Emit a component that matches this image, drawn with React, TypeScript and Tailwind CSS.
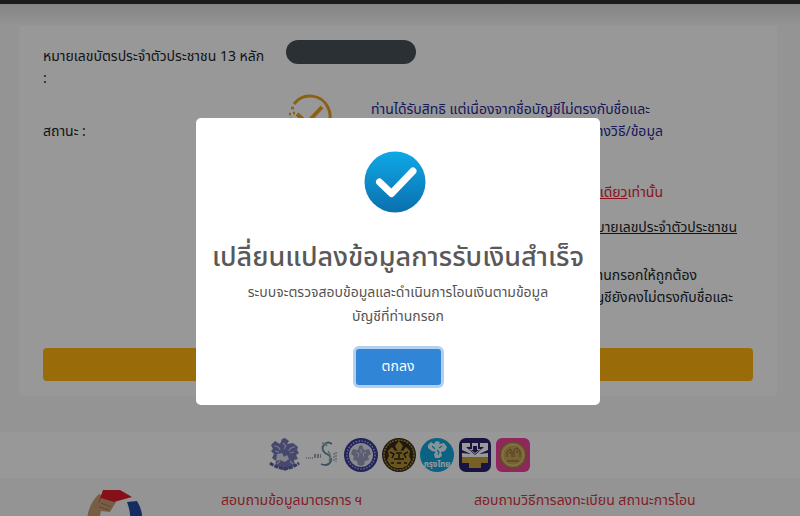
import type { ReactNode } from "react";

const SuccessIcon = () => (
  <svg viewBox="0 0 62 62" className="size-[62px]" aria-hidden="true">
    <defs>
      <linearGradient id="success" x1="0" y1="0" x2="0" y2="1">
        <stop offset="0" stopColor="#0fa8e6" />
        <stop offset="1" stopColor="#0b6fae" />
      </linearGradient>
    </defs>
    <circle cx="31" cy="31" r="30.5" fill="url(#success)" />
    <path
      d="M15.5 31 L27.5 42.5 L49 20"
      fill="none"
      stroke="#fff"
      strokeWidth="7"
      strokeLinecap="round"
      strokeLinejoin="round"
    />
  </svg>
);

const StatusIcon = () => (
  <svg
    viewBox="0 0 46 46"
    className="size-[46px]"
    fill="none"
    stroke="#e8a020"
    strokeWidth="3"
    aria-hidden="true"
  >
    <path d="M8 11 A20 20 0 1 1 23 43" />
    <path d="M5 15h3M3 21h2M7 20h2M4 26h3" strokeWidth="2.5" />
    <path d="M11 21 L21 30 L36 14" strokeWidth="4" />
  </svg>
);

const PartnerLogos = () => (
  <div className="flex justify-center gap-1 pr-0.5">
    <svg viewBox="0 0 34 34" className="size-[34px]" aria-hidden="true">
      <path
        d="M3 7l4-4 5 3 2-5 3-1 4 3-2 3 6-1 5 4-1 3 2 3-3 2 2 4-4 1 1 5-5 3-5 3-5-3-5-2 1-5-4-3 2-4-3-3 2-2z"
        fill="#7779b8"
      />
      <path
        d="M6 8q5 0 6 4M27 9q-5 0-6 4M7 13l4 1M26 14l-4 1M9 26l3-3M25 26l-3-3M15 5l3 3-2 3"
        fill="none"
        stroke="#c8c8e0"
        strokeWidth="1.2"
      />
      <path d="M9 16l5-1 2 4 3-2 2 4-4 3-5-2-4 1z" fill="#dcdcec" />
      <path d="M2 25q15 11 29 0" fill="none" stroke="#5b5ea8" strokeWidth="3" strokeDasharray="4 1" />
    </svg>
    <svg viewBox="0 0 34 34" className="size-[34px]" fill="none" aria-hidden="true">
      <path d="M0 20h7" stroke="#8c95a8" strokeWidth="1.5" strokeDasharray="1 1" />
      <path d="M8 19h7M8 17h7" stroke="#7c87a0" strokeWidth="1.5" strokeDasharray="2 1" />
      <path
        d="M26 6 Q22 3 19 6 Q14 10 19 15 Q26 18 25 23 Q22 29 15 26"
        stroke="#6389aa"
        strokeWidth="1.8"
      />
      <path d="M16 5q3 0 5 3M22 13q4 5 1 10" stroke="#8db5b9" strokeWidth="1.5" />
      <path d="M28 15v9M30 14v10" stroke="#7c87a0" strokeWidth="1" strokeDasharray="2 1" />
    </svg>
    <svg viewBox="0 0 34 34" className="size-[34px]" aria-hidden="true">
      <circle cx="17" cy="17" r="17" fill="#3b3b98" />
      <circle cx="17" cy="17" r="14" fill="none" stroke="#b5b5dd" strokeWidth="1.5" strokeDasharray="1.5 1.5" />
      <circle cx="17" cy="17" r="12" fill="#e4e4ee" />
      <path
        d="M9 11l5 1 1-4 3-1 2 5 5-1 2 5-3 2 1 4-4 1-1 4-3 1-3-1-1-4-4-1 1-4-3-2z"
        fill="#9a9cbc"
      />
      <path d="M12 14l3 2-1 3M22 14l-3 2 1 3M17 11v4" fill="none" stroke="#d9d9e5" />
    </svg>
    <svg viewBox="0 0 34 34" className="size-[34px]" aria-hidden="true">
      <circle cx="17" cy="17" r="17" fill="#332a1d" />
      <circle cx="17" cy="17" r="15" fill="none" stroke="#ac8c32" strokeWidth="1.5" strokeDasharray="2 1" />
      <path d="M17 3l4 5-2 4h-4l-2-4z" fill="#b18f31" />
      <path d="M6 13l4-4 3 4 4-1 4 1 3-4 4 4-1 5 2 4-4 6-5 2h-6l-5-2-4-6 2-4z" fill="#b18f31" />
      <path
        d="M8 14l4 2-2 4M26 14l-4 2 2 4M14 15h6M12 21h10M17 16v4M9 25h3M15 25h4M22 25h3"
        fill="none"
        stroke="#2a2118"
        strokeWidth="1.5"
      />
    </svg>
    <svg viewBox="0 0 34 34" className="size-[34px]" aria-hidden="true">
      <circle cx="17" cy="17" r="17" fill="#13a5dc" />
      <path
        d="M8 7l3-3 3 2 2-3 4 1-1 2 5-1 3 4-2 4-4 1 1 4-3 2h-4l-1-4 2-2-4-1-4-3z"
        fill="#e5f6fb"
      />
      <path d="M12 8l3 3M22 8l-3 2M17 12l2 2-1 3" fill="none" stroke="#13a5dc" strokeWidth="1.2" />
      <text x="17" y="29" textAnchor="middle" fill="#fff" fontSize="8" fontWeight="700">
        กรุงไทย
      </text>
    </svg>
    <svg viewBox="0 0 34 34" className="size-[34px]" aria-hidden="true">
      <rect x="1" y="0" width="32" height="34" rx="7" fill="#28206d" />
      <rect x="4" y="5" width="26" height="14" fill="#fff" />
      <path d="M12 3h10v6h4l-9 8-9-8h4z" fill="#28206d" />
      <path d="M14 5h6v6h3l-6 5-6-5h3z" fill="#fff" />
      <path d="M15 8h4v4h2l-4 3-4-3h2z" fill="#28206d" />
      <path d="M4 12l9 4-9-1zM30 12l-9 4 9-1z" fill="#28206d" />
      <path d="M4 19h26v6h-7v5h-12v-5h-7z" fill="#c6a13b" />
    </svg>
    <svg viewBox="0 0 34 34" className="size-[34px]" aria-hidden="true">
      <rect width="34" height="34" rx="6" fill="#ee429d" />
      <circle cx="17" cy="17" r="13" fill="#c6a45b" stroke="#a57a3d" strokeWidth="1.5" />
      <circle cx="17" cy="17" r="10.5" fill="none" stroke="#e6cf8d" />
      <path
        d="M11 19v-5l3-3 2 3v5M18 19v-7l3-2 3 4v5M11 23h12M13 15h2M20 14h2"
        fill="none"
        stroke="#9b7636"
        strokeWidth="1.3"
      />
    </svg>
  </div>
);

const CampaignLogo = () => (
  <svg viewBox="0 0 56 56" className="size-14" aria-hidden="true">
    <path d="M0 29Q2 13 12 4L29 12L23 22L14 21Q11 29 18 43L7 44Z" fill="#c59b72" />
    <path d="M14 13l10 4M12 17l10 3" stroke="#9d7550" />
    <path d="M16 0H33L45 7L27 12L14 8L11 14Z" fill="#e01b2c" />
    <path d="M40 12L50 11Q63 33 44 50Q34 57 20 54L24 44Q51 42 40 12Z" fill="#234aa0" />
  </svg>
);

const Line = ({ className, children }: { className: string; children: ReactNode }) => (
  <p className={`whitespace-nowrap ${className}`}>{children}</p>
);

const RegistrationPage = () => (
  <div className="bg-[#f7f7f7] text-sm leading-[22px] text-[#212529]">
    <header className="h-1 bg-[#2c2c2c]" />
    <div className="h-[22px] bg-linear-to-b from-[#dcdcdc] to-[#f8f8f8]" />

    <main className="mr-[23px] ml-[19px] rounded-sm bg-[#fdfdfd] px-6 pt-3 pb-[15px]">
      <div className="flex">
        <div className="w-[243px] shrink-0 pt-2">
          หมายเลขบัตรประจำตัวประชาชน 13 หลัก
          <br />:
        </div>
        <div className="mt-0.5 h-6 w-[130px] rounded-full bg-[#495059]" />
      </div>

      <div className="mt-[3px] flex h-[223px]">
        <div className="w-[243px] shrink-0 pt-7">สถานะ :</div>
        <div className="w-[85px] shrink-0">
          <StatusIcon />
        </div>
        <div className="flex-1 pt-1.5 text-right">
          <Line className="text-left text-[#2a2a98]">
            ท่านได้รับสิทธิ แต่เนื่องจากชื่อบัญชีไม่ตรงกับชื่อและ
          </Line>
          <Line className="pr-[90px] text-[#2a2a98]">ช่องทางวิธี/ข้อมูล</Line>
          <Line className="mt-[39px] pr-[90px] text-[#e62430]">
            <span className="underline">เดียว</span>เท่านั้น
          </Line>
          <Line className="mt-[13px] pr-4 underline">หมายเลขประจำตัวประชาชน</Line>
          <Line className="mt-[26px] pr-14">ท่านกรอกให้ถูกต้อง</Line>
          <Line className="pr-5">บัญชียังคงไม่ตรงกับชื่อและ</Line>
        </div>
      </div>

      <button
        type="button"
        aria-label="เปลี่ยนแปลงข้อมูล"
        className="mt-8 block h-[33px] w-full rounded-sm bg-[#ffb310]"
      />
    </main>

    <div className="mt-9 bg-[#fdfdfd] py-1.5">
      <PartnerLogos />
    </div>

    <footer className="flex items-start pt-3 pl-[87px] text-[#d93342]">
      <CampaignLogo />
      <p className="ml-[78px] w-[253px]">สอบถามข้อมูลมาตรการ ฯ</p>
      <p>สอบถามวิธีการลงทะเบียน สถานะการโอน</p>
    </footer>
  </div>
);

const SuccessDialog = () => (
  <div className="fixed inset-0 flex items-center justify-center bg-black/40 pt-[7px] pr-1">
    <div
      role="dialog"
      aria-modal="true"
      aria-labelledby="dialog-title"
      className="flex w-full max-w-[404px] flex-col items-center rounded-[5px] bg-white px-4 pt-[33px] pb-5 text-center text-[#545454]"
    >
      <div className="pr-1.5">
        <SuccessIcon />
      </div>
      <h2
        id="dialog-title"
        className="mt-[25px] text-[27px] leading-10 font-medium whitespace-nowrap text-[#595959]"
      >
        เปลี่ยนแปลงข้อมูลการรับเงินสำเร็จ
      </h2>
      <p className="mt-[3px] max-w-[320px] text-sm leading-6">
        ระบบจะตรวจสอบข้อมูลและดำเนินการโอนเงินตามข้อมูล
        <br />
        บัญชีที่ท่านกรอก
      </p>
      <button
        type="button"
        className="mt-5 h-9 w-[85px] rounded-[3px] bg-[#3085d6] text-sm text-white ring-3 ring-[#b3d1ee]"
      >
        ตกลง
      </button>
    </div>
  </div>
);

export default function App() {
  return (
    <div className="h-screen overflow-hidden bg-[#f7f7f7] font-['Noto_Sans_Thai','Noto_Sans',sans-serif]">
      <RegistrationPage />
      <SuccessDialog />
    </div>
  );
}
